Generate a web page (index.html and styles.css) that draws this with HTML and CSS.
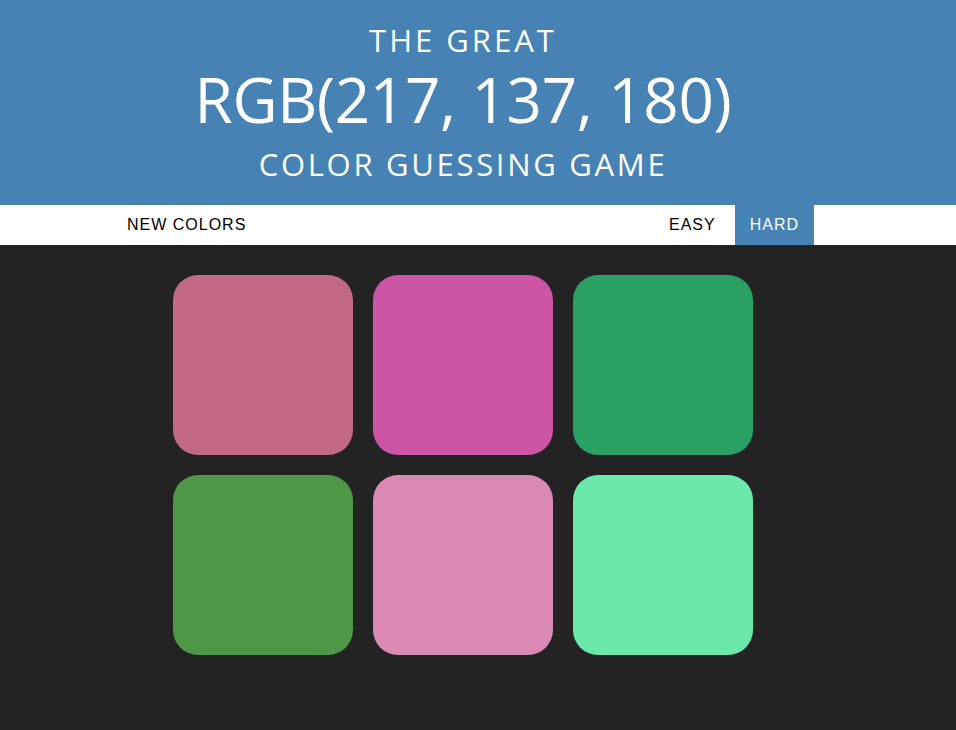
FILE: index.html
```html
<!DOCTYPE html>
<html>
<head>
<meta charset="utf-8">
<link rel="stylesheet" href="styles.css">
</head>
<body>
<header class="header">
  <h1 class="title">
    <span class="title-small">THE GREAT</span>
    <span class="title-big">RGB(217, 137, 180)</span>
    <span class="title-small title-last">COLOR GUESSING GAME</span>
  </h1>
</header>
<nav class="stripe">
  <div class="stripe-inner">
    <button class="btn">NEW COLORS</button>
    <span class="spacer"></span>
    <button class="btn btn-easy">EASY</button>
    <button class="btn btn-selected">HARD</button>
  </div>
</nav>
<main class="board">
  <div class="grid">
    <div class="square sq1"></div>
    <div class="square sq2"></div>
    <div class="square sq3"></div>
    <div class="square sq4"></div>
    <div class="square sq5"></div>
    <div class="square sq6"></div>
  </div>
</main>
</body>
</html>
```
FILE: styles.css
```css
html, body {
  margin: 0;
  padding: 0;
  background: #232323;
  height: 100%;
}
.header {
  background: #4682b4;
  height: 205px;
  padding-right: 30px;
  box-sizing: border-box;
  color: #fff;
  text-align: center;
  font-family: "Open Sans", sans-serif;
  font-weight: 400;
}
.title {
  margin: 0;
  padding-top: 20px;
  font-weight: 400;
}
.title span {
  display: block;
}
.title-small {
  font-size: 31px;
  line-height: 40px;
  letter-spacing: 3px;
}
.title-big {
  font-size: 62px;
  line-height: 78px;
  letter-spacing: -0.35px;
}
.title-last {
  line-height: 52px;
  letter-spacing: 2.7px;
}
.stripe {
  background: #fff;
  height: 40px;
  padding-right: 30px;
}
.stripe-inner {
  width: 702px;
  height: 40px;
  margin: 0 auto;
  display: flex;
}
.spacer { flex: 1; }
.btn {
  border: none;
  background: #fff;
  color: #000;
  font-family: "Liberation Sans", Arial, sans-serif;
  font-size: 16px;
  letter-spacing: 1px;
  padding: 0 15px;
  height: 40px;
  margin: 0;
  text-transform: uppercase;
}
.btn-easy {
  margin-right: 4px;
}
.btn-selected {
  background: #4682b4;
  color: #fff;
}
.board {
  padding-right: 30px;
}
.grid {
  width: 580px;
  margin: 0 auto;
  padding-top: 30px;
  display: grid;
  grid-template-columns: repeat(3, 180px);
  gap: 20px;
}
.square {
  width: 180px;
  height: 180px;
  border-radius: 25px;
}
.sq1 { background: #c26984; }
.sq2 { background: #cc55a6; }
.sq3 { background: #2aa065; }
.sq4 { background: #4e9746; }
.sq5 { background: #da89b4; }
.sq6 { background: #6ce8ab; }
```
